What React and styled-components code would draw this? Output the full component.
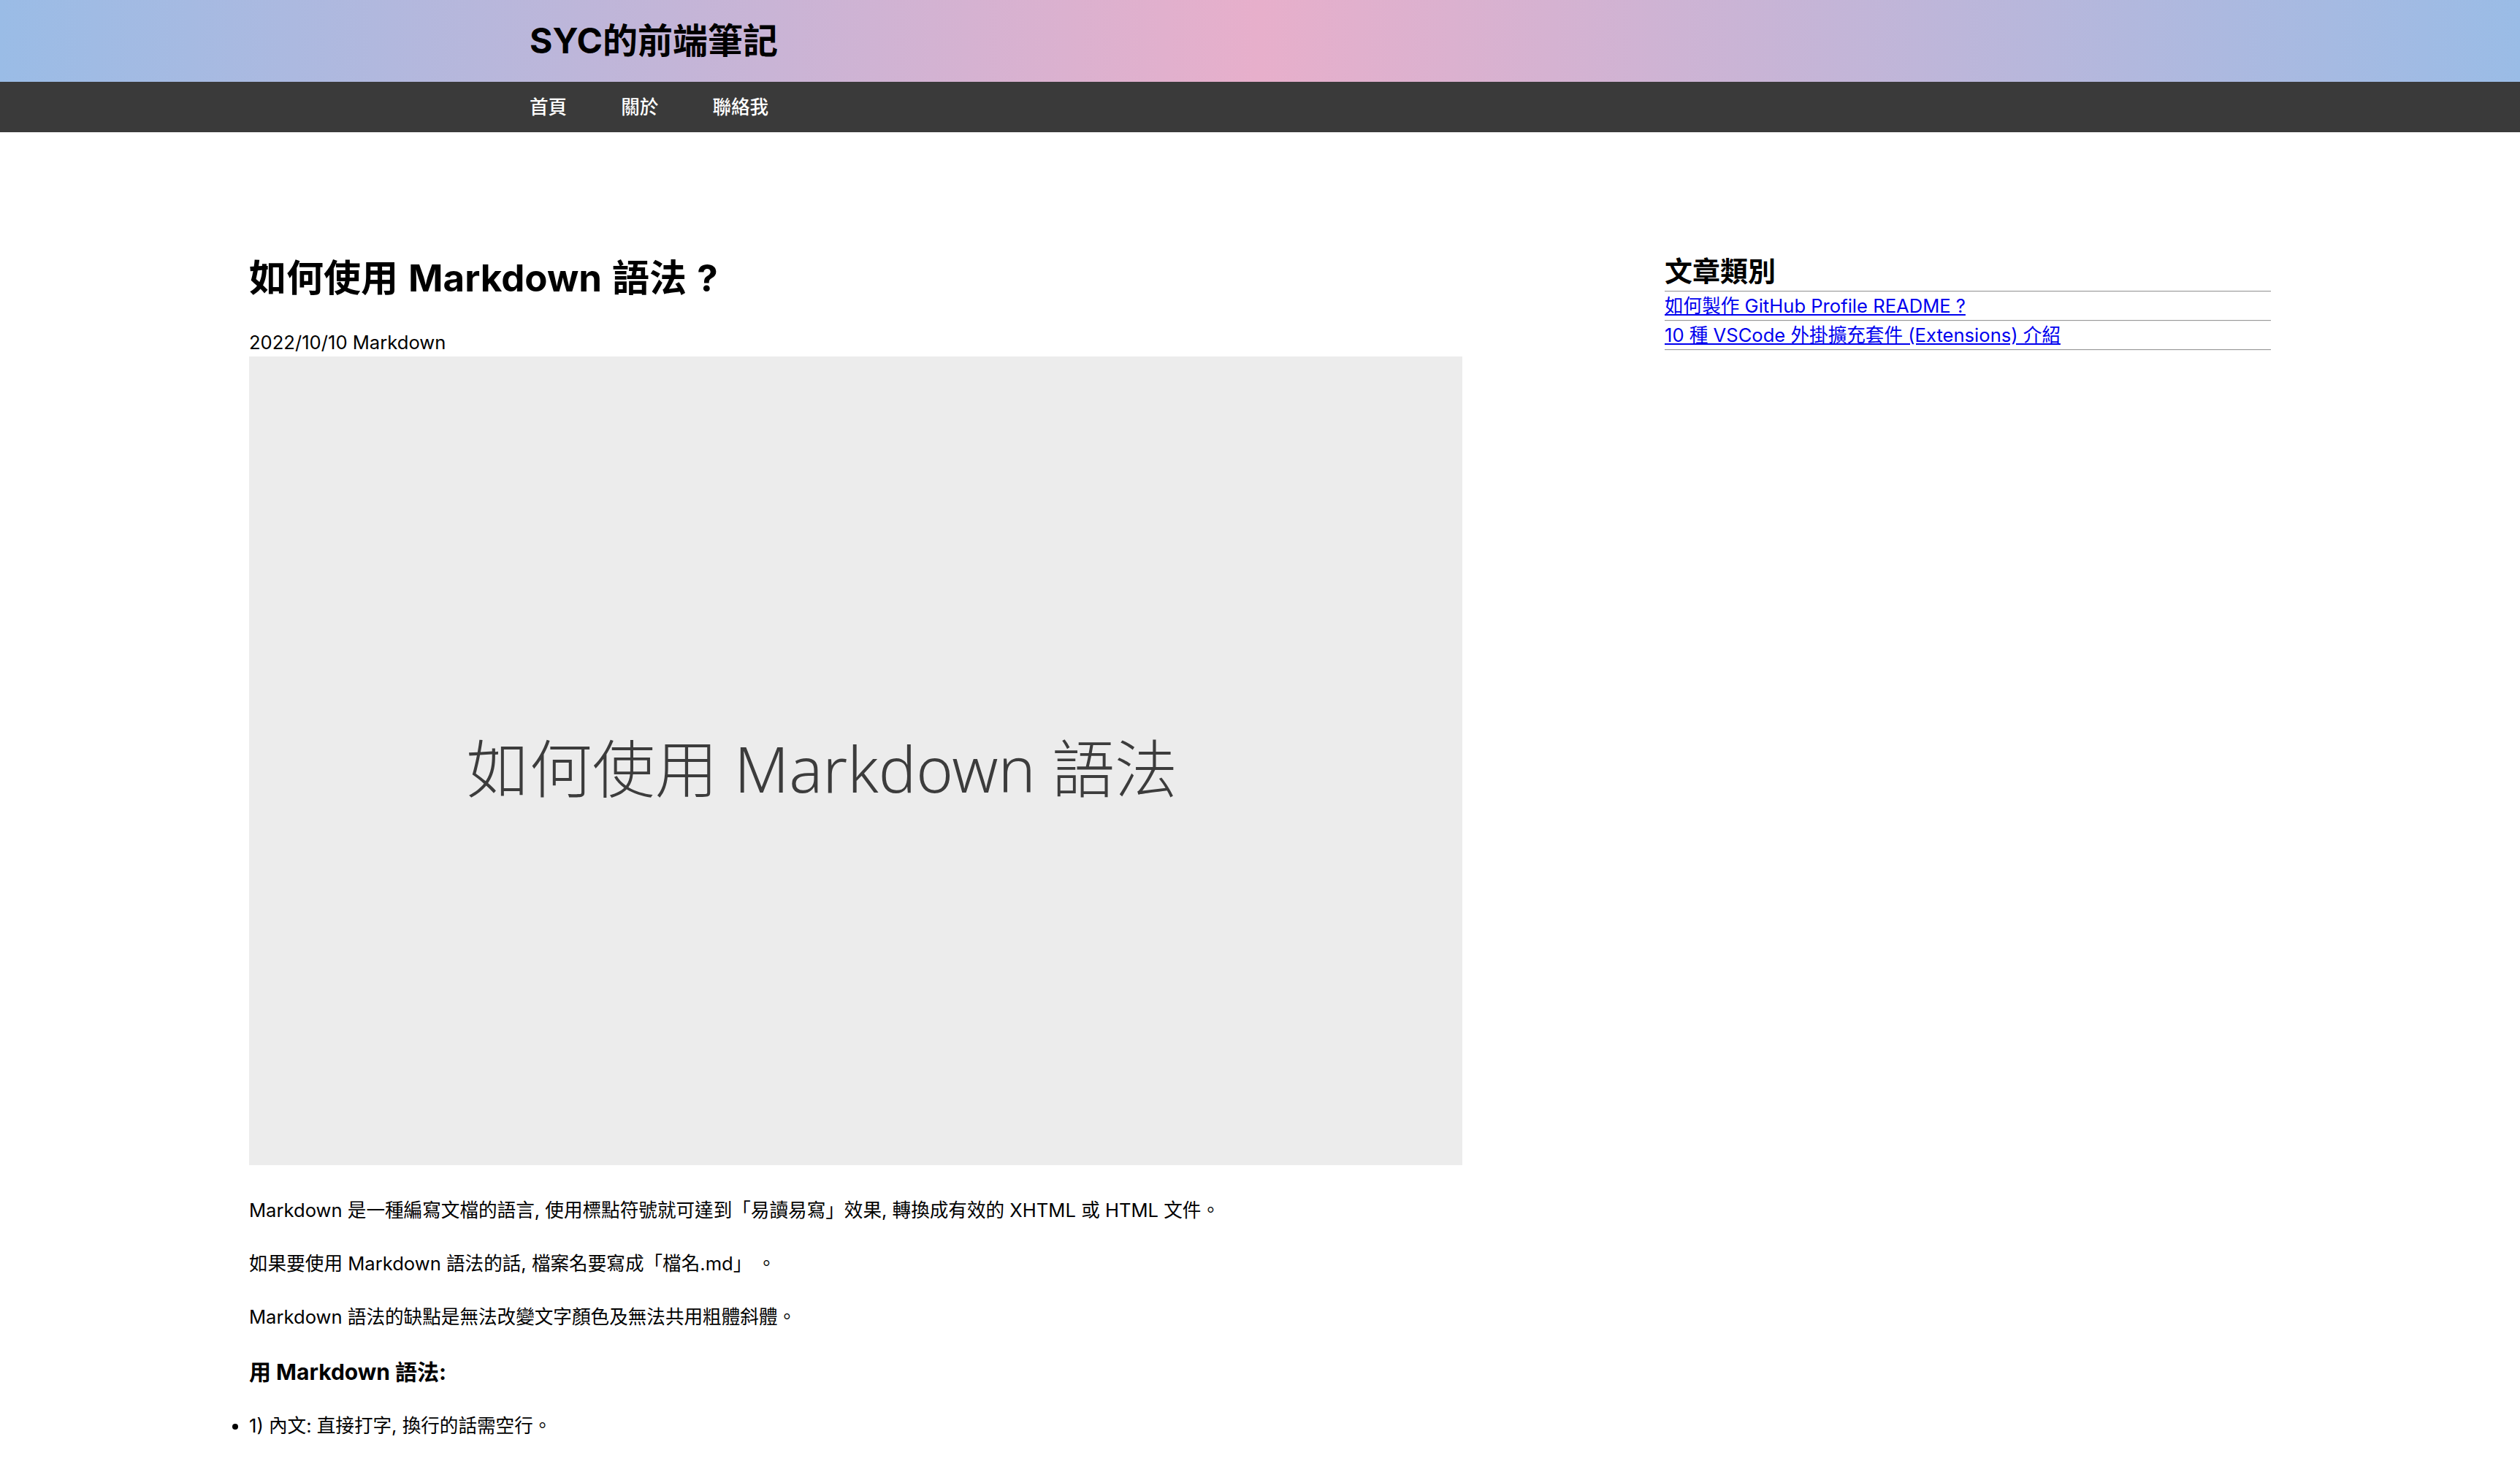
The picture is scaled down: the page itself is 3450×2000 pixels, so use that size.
import styled, { createGlobalStyle } from 'styled-components';

const GlobalStyle = createGlobalStyle`
	html, body {
		margin: 0;
		padding: 0;
		background: #ffffff;
	}
	body {
		font-family: 'Inter', 'Noto Sans CJK TC', sans-serif;
		color: #000000;
	}
	* {
		box-sizing: border-box;
	}
`;

const categories = [
	'如何製作 GitHub Profile README ?',
	'10 種 VSCode 外掛擴充套件 (Extensions) 介紹',
];

const navItems = ['首頁', '關於', '聯絡我'];

export default function App() {
	return (
		<>
			<GlobalStyle />
			<StyledBanner>
				<StyledInner>
					<h1>SYC的前端筆記</h1>
				</StyledInner>
			</StyledBanner>
			<StyledNav>
				<StyledInner>
					{navItems.map((item) => (
						<a key={item} href='#'>
							{item}
						</a>
					))}
				</StyledInner>
			</StyledNav>
			<StyledMain>
				<StyledArticle>
					<h1>如何使用 Markdown 語法 ?</h1>
					<p className='meta'>2022/10/10 Markdown</p>
					<StyledCover>
						<span>如何使用 Markdown 語法</span>
					</StyledCover>
					<p>
						Markdown 是一種編寫文檔的語言, 使用標點符號就可達到「易讀易寫」效果,
						轉換成有效的 XHTML 或 HTML 文件。
					</p>
					<p>如果要使用 Markdown 語法的話, 檔案名要寫成「檔名.md」 。</p>
					<p>Markdown 語法的缺點是無法改變文字顏色及無法共用粗體斜體。</p>
					<h3>用 Markdown 語法:</h3>
					<ul>
						<li>1) 內文: 直接打字, 換行的話需空行。</li>
					</ul>
				</StyledArticle>
				<StyledSidebar>
					<h2>文章類別</h2>
					<StyledRule />
					{categories.map((title) => (
						<div key={title}>
							<a href='#'>{title}</a>
							<StyledRule />
						</div>
					))}
				</StyledSidebar>
			</StyledMain>
		</>
	);
}

const StyledBanner = styled.header`
	height: 112px;
	background: linear-gradient(to right, #9abce6 0%, #e7afcb 50%, #9abce6 100%);
	display: flex;
	align-items: center;
	h1 {
		margin: 0;
		font-size: 48px;
		font-weight: 700;
		line-height: 1;
	}
`;

const StyledInner = styled.div`
	width: 2000px;
	margin: 0 auto;
	display: flex;
	align-items: center;
`;

const StyledNav = styled.nav`
	height: 69px;
	background: #3a3a3a;
	display: flex;
	align-items: center;
	a {
		color: #ffffff;
		text-decoration: none;
		font-size: 25.6px;
		font-weight: 500;
		margin-right: 74px;
		line-height: 1;
	}
`;

const StyledMain = styled.main`
	width: 2768px;
	margin: 0 auto;
	padding-top: 170px;
	display: grid;
	grid-template-columns: 1661px 830px;
	column-gap: 277px;
	align-items: start;
`;

const StyledArticle = styled.article`
	display: flex;
	flex-direction: column;
	h1 {
		margin: 0;
		font-size: 51px;
		line-height: 60px;
		font-weight: 700;
		word-spacing: 2px;
	}
	.meta {
		margin: 43px 0 4px;
		font-size: 25.6px;
		line-height: 30px;
	}
	p {
		margin: 0 0 37px;
		font-size: 25.6px;
		line-height: 36px;
	}
	div + p {
		margin-top: 44px;
	}
	h3 {
		margin: 2px 0 38px;
		font-size: 30px;
		line-height: 36px;
		font-weight: 700;
	}
	ul {
		margin: 0;
		padding: 0;
		list-style: disc outside;
	}
	li {
		font-size: 25.6px;
		line-height: 36px;
	}
`;

const StyledCover = styled.div`
	height: 1107px;
	background: #ececec;
	display: flex;
	align-items: center;
	justify-content: center;
	padding: 12px 92px 0 0;
	span {
		font-family: 'Noto Sans', 'Noto Sans CJK TC', sans-serif;
		font-size: 86px;
		font-weight: 300;
		color: #3c3c3c;
		white-space: nowrap;
	}
`;

const StyledSidebar = styled.aside`
	h2 {
		margin: 1px 0 8px;
		font-size: 38px;
		line-height: 38px;
		font-weight: 700;
	}
	a {
		display: block;
		font-size: 25.6px;
		line-height: 38px;
		color: #0000ee;
		text-decoration: underline;
	}
`;

const StyledRule = styled.hr`
	margin: 0;
	height: 0;
	border: 0;
	border-top: 1px solid #9a9a9a;
	border-bottom: 1px solid #eeeeee;
`;
